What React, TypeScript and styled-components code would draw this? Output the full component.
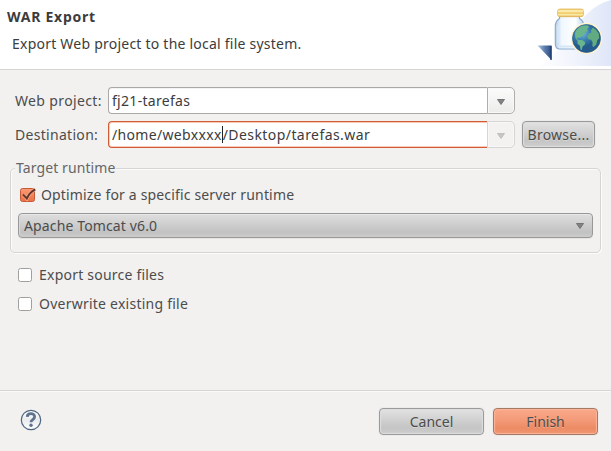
import React from "react";
import styled, { createGlobalStyle } from "styled-components";

const GlobalStyle = createGlobalStyle`
  * { box-sizing: border-box; }
  body { margin: 0; background: #f2f1f0; }
`;

const Dialog = styled.main`
  width: 611px;
  height: 451px;
  display: flex;
  flex-direction: column;
  overflow: hidden;
  background: #f2f1f0;
  color: #4c4c4c;
  font: 14px/20px "Noto Sans", "Open Sans", sans-serif;
  white-space: nowrap;
`;

const Header = styled.header`
  height: 70px;
  flex: none;
  display: flex;
  justify-content: space-between;
  background: #fff;
  border-bottom: 1px solid #d6d5d3;
  color: #3c3c3c;
`;

const Titles = styled.div`
  padding: 7px 0 0 7px;
`;

const Title = styled.h1`
  margin: 0;
  font-size: 14px;
  line-height: 20px;
  font-weight: 700;
`;

const Description = styled.p`
  margin: 7px 0 0 5px;
`;

const Text = styled.span<{ $track?: number }>`
  letter-spacing: ${(p) => p.$track ?? 0}px;
`;

const Body = styled.section`
  flex: 1;
  padding: 17px 10px 0;
`;

const Field = styled.div`
  display: flex;
  align-items: center;
  height: 27px;
  margin-bottom: 7px;
  padding-left: 5px;
`;

const FieldLabel = styled.label`
  width: 93px;
`;

const Combo = styled.div`
  display: flex;
  width: 407px;
  height: 27px;
  color: #3c3c3c;
`;

const ComboValue = styled.div<{ $focused?: boolean }>`
  flex: 1;
  display: flex;
  align-items: center;
  padding-left: 3px;
  background: #fff;
  border: 1px solid ${(p) => (p.$focused ? "#cf5c34" : "#a9a8a7")};
  border-right: 0;
  border-radius: 4px 0 0 4px;
  box-shadow: ${(p) => (p.$focused ? "inset 0 1px #fbc9b5, inset 0 -1px #fbc9b5, inset 1px 0 #fbc9b5" : "inset 0 1px #f4f4f4")};
`;

const ComboArrow = styled.div<{ $disabled?: boolean }>`
  width: 28px;
  display: flex;
  align-items: center;
  justify-content: center;
  padding-top: 2px;
  border: 1px solid ${(p) => (p.$disabled ? "#d6d5d4" : "#afaeac")};
  border-radius: 0 5px 5px 0;
  background: ${(p) => (p.$disabled ? "#f3f2f1" : "linear-gradient(#fbfbfb, #ececeb)")};
  box-shadow: inset 0 0 0 1px #f8f8f8;
`;

const Caret = styled.i`
  width: 1px;
  height: 17px;
  background: #222;
`;

const Button = styled.button<{ $primary?: boolean; $width: number }>`
  width: ${(p) => p.$width}px;
  height: 27px;
  padding: 0;
  border: 1px solid ${(p) => (p.$primary ? "#a67966" : "#9a9a9a")};
  border-radius: 4px;
  background: ${(p) => (p.$primary ? "linear-gradient(#faa98b, #f39a78 45%, #ec8c65 75%, #f09470)" : "linear-gradient(#e2e2e2, #d0d0d0 45%, #c5c5c5 75%, #cecece)")};
  box-shadow: inset 0 0 1px 1px ${(p) => (p.$primary ? "#fbb497" : "#dedede")}, 0 0 0 1px #ecebea;
  color: #4c4c4c;
  font: inherit;
  text-shadow: 0 1px rgba(255, 255, 255, 0.3);
`;

const Browse = styled(Button)`
  margin-left: 7px;
`;

const Group = styled.fieldset`
  height: 94px;
  margin: 11px 0 0;
  padding: 0 7px;
  border: 0;
  display: grid;
  grid-template-rows: 9px auto;
  min-width: 0;
  width: 591px;
`;

const GroupFrame = styled.div`
  grid-area: 1 / 1 / 3 / 2;
  margin: 9px 0 0 -7px;
  width: 591px;
  height: 85px;
  border: 1px solid #d6d5d4;
  border-radius: 5px;
  box-shadow: inset 1px 1px #fbfbfb, 1px 1px #fbfbfb;
`;

const GroupTitle = styled.div`
  grid-area: 1 / 1;
  justify-self: start;
  margin-left: -2px;
  height: 20px;
  padding: 0 0 0 1px;
  background: #f2f1f0;
  color: #666;
  line-height: 18px;
`;

const GroupContent = styled.div`
  grid-area: 2 / 1;
  padding-top: 17px;
`;

const CheckRow = styled.label<{ $indent?: number; $gap?: number }>`
  display: flex;
  align-items: center;
  height: 20px;
  gap: ${(p) => p.$gap ?? 7}px;
  margin-left: ${(p) => p.$indent ?? 0}px;
`;

const Box = styled.span`
  width: 14px;
  height: 14px;
  border: 1px solid #a09f9e;
  border-radius: 2.5px;
  background: #fff;
`;

const Select = styled.div`
  display: flex;
  justify-content: space-between;
  align-items: center;
  width: 575px;
  height: 25px;
  margin: 8px 0 0 1px;
  padding: 0 8px 0 5px;
  border: 1px solid #989898;
  border-radius: 4px;
  background: linear-gradient(#dedede, #d0d0d0 40%, #c2c2c2 80%, #cdcdcd);
  box-shadow: inset 0 1px #e8e8e8, inset 1px 0 #d8d8d8, 0 1px #e6e5e4;
`;

const Options = styled.div`
  display: grid;
  row-gap: 9px;
  margin: 12px 0 0 8px;
`;

const Footer = styled.footer`
  height: 61px;
  flex: none;
  display: flex;
  justify-content: space-between;
  align-items: flex-start;
  padding: 17px 13px 0 20px;
  border-top: 1px solid #d6d5d4;
  box-shadow: inset 0 1px #fafafa;
`;

const Help = styled.span`
  display: flex;
  padding-top: 1px;
`;

const Actions = styled.div`
  display: flex;
  gap: 9px;
`;

const Arrow = ({ faded = false }: { faded?: boolean }) => (
  <svg width="8" height="6" viewBox="0 0 8 6">
    <path d="M.5.5h7L4 5.5z" fill={faded ? "#c5c5c4" : "#838383"} stroke={faded ? "#b9b9b8" : "#646464"} strokeWidth=".8" />
  </svg>
);

const CheckedBox = () => (
  <svg width="17" height="16" viewBox="0 0 17 16">
    <defs>
      <linearGradient id="tick" x2="0" y2="1"><stop stopColor="#fa9b77" /><stop offset="1" stopColor="#ed6f42" /></linearGradient>
    </defs>
    <rect x=".5" y="1.5" width="14" height="13" rx="2" fill="url(#tick)" stroke="#c45b35" />
    <path d="M3.300 7.700l3.500 3.800C8.300 8 11 4.600 15.200 2.300" fill="none" stroke="#fcbb9f" strokeWidth="3.200" />
    <path d="M3 7.500l3.800 4C8.300 8 11 4.600 15.200 2.300" fill="none" stroke="#653527" strokeWidth="2" />
  </svg>
);

const HelpIcon = () => (
  <svg width="22" height="22" viewBox="0 0 22 22">
    <defs><linearGradient id="help" x2="0" y2="1"><stop stopColor="#fff" /><stop offset=".5" stopColor="#e9ebed" /><stop offset="1" stopColor="#fff" /></linearGradient></defs>
    <circle cx="11" cy="11" r="9.700" fill="url(#help)" stroke="#506681" strokeWidth="1.200" />
    <path d="M7.200 7.900C7.300 3.800 14.700 3.600 14.600 7.700c0 2.900-3.600 2.700-3.600 5.500" fill="none" stroke="#60738e" strokeWidth="2.800" />
    <circle cx="11" cy="16.300" r="1.700" fill="#60738e" />
  </svg>
);

const WarBanner = () => (
  <svg width="91" height="66" viewBox="0 0 91 66">
    <defs>
      <linearGradient id="sky" x1="0" x2="1"><stop stopColor="#fff" /><stop offset=".5" stopColor="#f1f4fc" /><stop offset="1" stopColor="#dfe6f8" /></linearGradient>
      <linearGradient id="lid" x2="0" y2="1"><stop stopColor="#eac45f" /><stop offset=".25" stopColor="#fff4c2" /><stop offset=".55" stopColor="#efc65e" /><stop offset=".75" stopColor="#fff0b5" /><stop offset="1" stopColor="#dfab43" /></linearGradient>
      <linearGradient id="glass"><stop stopColor="#b7cfe7" /><stop offset=".22" stopColor="#f0f7fe" /><stop offset=".7" stopColor="#fff" /><stop offset="1" stopColor="#bcd5eb" /></linearGradient>
      <radialGradient id="sea" cx=".35" cy=".3"><stop stopColor="#78b9dc" /><stop offset=".55" stopColor="#3a80b0" /><stop offset="1" stopColor="#245a8c" /></radialGradient>
      <linearGradient id="corner"><stop stopColor="#b2cbe5" /><stop offset=".5" stopColor="#5b7eae" /><stop offset="1" stopColor="#2b4a81" /></linearGradient>
    </defs>
    <path d="M91 0C72 5 61 19 50 35 40 48 31 59 17 66h74z" fill="url(#sky)" />
    <path d="M17.500 45.500h14V60z" fill="url(#corner)" />
    <path d="M31 46v14" stroke="#203b6d" strokeWidth="1.300" />
    <path d="M39.500 16v2.500c-2.700 1.800-4.200 4-4.200 7.500v18c0 3.300 1.700 5 4.500 5h19.500c3 0 4.600-1.700 4.600-5V26c0-3.500-1.500-5.700-4.400-7.500V16z" fill="url(#glass)" stroke="#89acd0" strokeWidth="1.100" />
    <path d="M38 26v17M61.500 25v15M40 46.500h18" stroke="#d5e6f5" strokeWidth="2" fill="none" />
    <rect x="37.500" y="9" width="26" height="7.700" rx="2.500" fill="url(#lid)" stroke="#e4b75a" strokeWidth=".8" />
    <circle cx="66.500" cy="38.500" r="15.700" fill="#fff5ce" />
    <circle cx="66.500" cy="38.500" r="14" fill="url(#sea)" stroke="#285d87" strokeWidth=".7" />
    <path d="M55 33c1.200-3.800 4-6 7.500-7.200l5-.5 1.500 1.700-2 2 1 2-3 1-1 3-3 1.500-1.500 1.500-2-.5-.5 1.500 2 1 3 0 3.200 2.200-.5 2.500-2.200 1.700-.5 3-1.200.8-1-4.500-2.500-2.500 .5-2-2.500-3.500z" fill="#6ab58b" />
    <path d="M73 27.500l3.200 2.500 2.500 3.500.6 4.500-2 2.200-1 4.300-2.500 2.500-1.500-1 .3-3.500-1.500-2.700-3-.5-.8-2.700 1.800-3 2.300-1-.5-2.200z" fill="#62aa80" />
  </svg>
);

export default function App() {
  return (
    <>
      <GlobalStyle />
      <Dialog>
        <Header>
          <Titles>
            <Title><Text $track={0.75}>WAR Export</Text></Title>
            <Description><Text $track={0.23}>Export Web project to the local file system.</Text></Description>
          </Titles>
          <WarBanner />
        </Header>
        <Body>
          <Field>
            <FieldLabel><Text $track={0.36}>Web project:</Text></FieldLabel>
            <Combo>
              <ComboValue><Text $track={0.3}>fj21-tarefas</Text></ComboValue>
              <ComboArrow><Arrow /></ComboArrow>
            </Combo>
          </Field>
          <Field>
            <FieldLabel><Text $track={0.3}>Destination:</Text></FieldLabel>
            <Combo>
              <ComboValue $focused><Text $track={0.33}>/home/webxxxx</Text><Caret /><Text $track={0.43}>/Desktop/tarefas.war</Text></ComboValue>
              <ComboArrow $disabled><Arrow faded /></ComboArrow>
            </Combo>
            <Browse $width={73}><Text $track={0.25}>Browse...</Text></Browse>
          </Field>
          <Group>
            <GroupFrame />
            <GroupTitle><Text $track={0.1}>Target runtime</Text></GroupTitle>
            <GroupContent>
              <CheckRow $indent={3} $gap={4}><CheckedBox /><Text $track={0.16}>Optimize for a specific server runtime</Text></CheckRow>
              <Select><Text $track={0.13}>Apache Tomcat v6.0</Text><Arrow /></Select>
            </GroupContent>
          </Group>
          <Options>
            <CheckRow><Box /><Text $track={0.22}>Export source files</Text></CheckRow>
            <CheckRow><Box /><Text $track={0.24}>Overwrite existing file</Text></CheckRow>
          </Options>
        </Body>
        <Footer>
          <Help><HelpIcon /></Help>
          <Actions>
            <Button $width={105}><Text>Cancel</Text></Button>
            <Button $width={105} $primary><Text>Finish</Text></Button>
          </Actions>
        </Footer>
      </Dialog>
    </>
  );
}
